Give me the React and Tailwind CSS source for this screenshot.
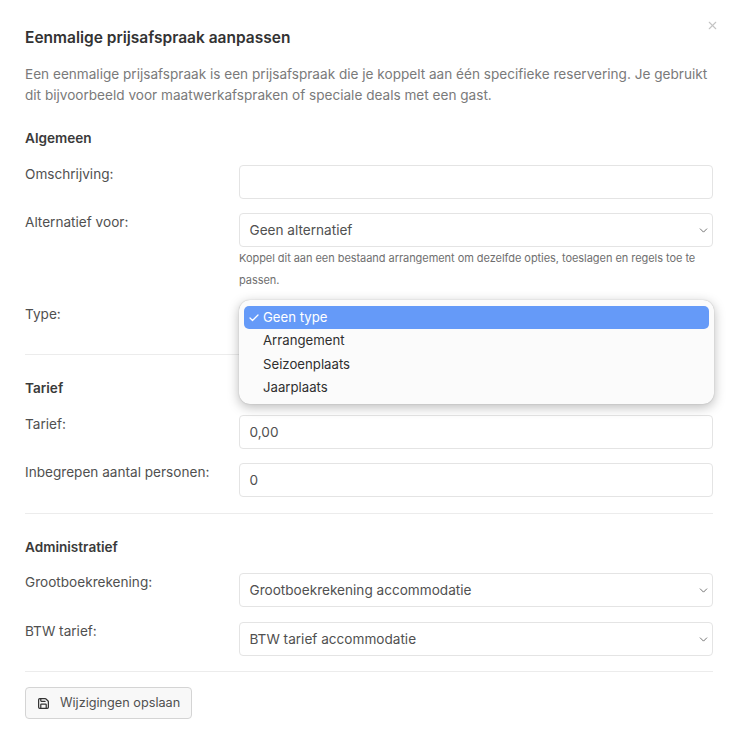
import React from "react";
import { Check, ChevronDown, Save, X } from "lucide-react";

function Field({ label, children, className = "" }) {
  return (
    <div className={`flex ${className}`}>
      <div className="w-[214px] shrink-0 text-[13.6px] leading-[18px] text-[#505050]">{label}</div>
      <div className="min-w-0 flex-1">{children}</div>
    </div>
  );
}

function Box({ value, select }) {
  return (
    <div className="relative flex h-[34px] items-center rounded-[4px] border border-[#e4e4e4] bg-white pl-[9.5px] text-[13.6px] text-[#505050]">
      <span>{value}</span>
      {select && <ChevronDown className="absolute right-[2px] top-[10px] h-[13px] w-[13px] text-[#555555]" strokeWidth={1.5} />}
    </div>
  );
}

function Heading({ children }) {
  return <div className="text-[13.6px] font-semibold leading-[20px] text-[#3a3a3a]">{children}</div>;
}

function Option({ children }) {
  return <div className="flex h-[23.4px] items-center pl-[19px] text-[13.2px] text-[#2f2f2f]">{children}</div>;
}

export default function App() {
  return (
    <div className="relative h-[743px] w-[739px] overflow-hidden bg-white pl-[25px] pr-[26px] pt-[28px] font-['Inter',sans-serif]">
      <X className="absolute right-[20px] top-[19px] h-[13px] w-[13px] text-[#c4c4c4]" strokeWidth={2} />
      <h1 className="text-[15.5px] font-semibold leading-[20px] text-[#333333]">Eenmalige prijsafspraak aanpassen</h1>
      <p className="mt-[16px] w-[688px] text-[13.6px] leading-[21px] text-[#7a7a7a]">
        Een eenmalige prijsafspraak is een prijsafspraak die je koppelt aan één specifieke reservering. Je gebruikt dit bijvoorbeeld voor maatwerkafspraken of speciale deals met een gast.
      </p>

      <div className="mt-[22px]"><Heading>Algemeen</Heading></div>
      <Field label="Omschrijving:" className="mt-[17px]"><Box value="" /></Field>
      <Field label="Alternatief voor:" className="mt-[14px]">
        <Box value="Geen alternatief" select />
        <p className="text-[11px] leading-[22px] tracking-[-0.05px] text-[#6f6f6f]">
          Koppel dit aan een bestaand arrangement om dezelfde opties, toeslagen en regels toe te passen.
        </p>
      </Field>
      <Field label="Type:" className="mt-[14px]">
        <div className="relative">
          <Box value="" />
          <div className="absolute left-0 right-[-1px] top-[-5px] z-10 rounded-[11px] bg-[#fbfbfb] px-[5px] pb-[3.5px] pt-[5.5px] shadow-[0_3px_12px_rgba(0,0,0,0.28),0_0_1px_rgba(0,0,0,0.3)]">
            <div className="flex h-[23.4px] items-center gap-[3px] rounded-[5px] bg-[#659af8] pl-[4px] pt-[1px] text-[13.2px] text-white">
              <Check className="h-[12px] w-[12px]" strokeWidth={2.5} />
              <span>Geen type</span>
            </div>
            <Option>Arrangement</Option>
            <div className="pt-[0.5px]"><Option>Seizoenplaats</Option></div>
            <div className="pt-[0.5px]"><Option>Jaarplaats</Option></div>
          </div>
        </div>
      </Field>

      <div className="mt-[15px] border-t border-[#ececec]" />
      <div className="mt-[23px]"><Heading>Tarief</Heading></div>
      <Field label="Tarief:" className="mt-[17px]"><Box value="0,00" /></Field>
      <Field label="Inbegrepen aantal personen:" className="mt-[14px]"><Box value="0" /></Field>

      <div className="mt-[16px] border-t border-[#ececec]" />
      <div className="mt-[23px]"><Heading>Administratief</Heading></div>
      <Field label="Grootboekrekening:" className="mt-[16px]"><Box value="Grootboekrekening accommodatie" select /></Field>
      <Field label="BTW tarief:" className="mt-[15px]"><Box value="BTW tarief accommodatie" select /></Field>

      <div className="mt-[15px] border-t border-[#ececec]" />
      <button className="mt-[15px] flex h-[32px] w-[167px] items-center whitespace-nowrap rounded-[4px] border border-[#d4d4d4] bg-[#f8f8f8] pl-[11px] text-[12.7px] text-[#505050]">
        <Save className="h-[13px] w-[13px] text-[#333333]" strokeWidth={2.25} />
        <span className="ml-[10px]">Wijzigingen opslaan</span>
      </button>
    </div>
  );
}
